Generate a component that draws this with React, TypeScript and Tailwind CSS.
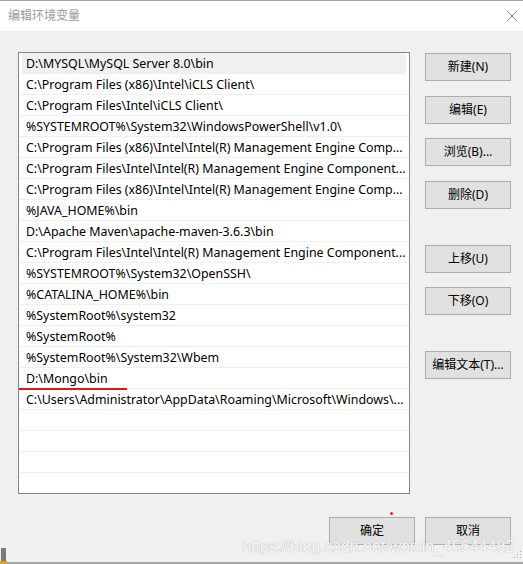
import React from "react";

const items = [
  "D:\\MYSQL\\MySQL Server 8.0\\bin",
  "C:\\Program Files (x86)\\Intel\\iCLS Client\\",
  "C:\\Program Files\\Intel\\iCLS Client\\",
  "%SYSTEMROOT%\\System32\\WindowsPowerShell\\v1.0\\",
  "C:\\Program Files (x86)\\Intel\\Intel(R) Management Engine Comp...",
  "C:\\Program Files\\Intel\\Intel(R) Management Engine Component...",
  "C:\\Program Files (x86)\\Intel\\Intel(R) Management Engine Comp...",
  "%JAVA_HOME%\\bin",
  "D:\\Apache Maven\\apache-maven-3.6.3\\bin",
  "C:\\Program Files\\Intel\\Intel(R) Management Engine Component...",
  "%SYSTEMROOT%\\System32\\OpenSSH\\",
  "%CATALINA_HOME%\\bin",
  "%SystemRoot%\\system32",
  "%SystemRoot%",
  "%SystemRoot%\\System32\\Wbem",
  "D:\\Mongo\\bin",
  "C:\\Users\\Administrator\\AppData\\Roaming\\Microsoft\\Windows\\...",
];

const rows: string[] = [...items];
while (rows.length < 21) rows.push("");

function Btn({ label, className = "" }: { label: string; className?: string }) {
  return (
    <div
      className={
        "w-[86px] h-[28px] flex items-center justify-center bg-[#e1e1e1] border border-[#adadad] text-[12px] text-black " +
        className
      }
    >
      {label}
    </div>
  );
}

export default function App() {
  return (
    <div
      className="relative w-[523px] h-[564px] bg-[#f0f0f0] overflow-hidden"
      style={{ fontFamily: '"Noto Sans", "Noto Sans CJK SC", sans-serif' }}
    >
      {/* title bar */}
      <div className="h-[31px] bg-white border-t border-[#a8a8a8] flex items-center justify-between pl-[8px] pr-[5px]">
        <span className="text-[12px] text-[#9a9a9a]">编辑环境变量</span>
        <svg width="12" height="12" viewBox="0 0 12 12">
          <path d="M1 1 L11 11 M11 1 L1 11" stroke="#8a8a8a" strokeWidth="1" />
        </svg>
      </div>

      {/* body */}
      <div className="flex pl-[18px] pt-[21px]">
        <div className="relative w-[392px] h-[442px] bg-white border border-[#828790] overflow-hidden">
          {rows.map((t, i) => (
            <div
              key={i}
              className={
                "h-[21px] border-b border-[#f0f0f0] flex items-center pt-[3px] text-[12.4px] text-black whitespace-nowrap overflow-hidden " +
                (i === 0 ? "bg-[#f0f0f0] mx-[3px] pl-[4px]" : "pl-[7px]")
              }
            >
              {t}
            </div>
          ))}
          <span className="absolute left-0 top-[335px] w-[108px] h-[2px] bg-[#e3141b]" />
        </div>

        <div className="ml-[15px] flex flex-col">
          <Btn label="新建(N)" className="mt-[1px]" />
          <Btn label="编辑(E)" className="mt-[15px]" />
          <Btn label="浏览(B)..." className="mt-[14px]" />
          <Btn label="删除(D)" className="mt-[15px]" />
          <Btn label="上移(U)" className="mt-[36px]" />
          <Btn label="下移(O)" className="mt-[14px]" />
          <Btn label="编辑文本(T)..." className="mt-[36px]" />
        </div>
      </div>

      {/* bottom buttons */}
      <div className="flex justify-end gap-[10px] pr-[12px] mt-[23px]">
        <Btn label="确定" />
        <Btn label="取消" />
      </div>

      {/* red dot */}
      <span className="absolute left-[390px] top-[512px] w-[3px] h-[3px] rounded-full bg-[#f02020]" />

      {/* watermark */}
      <span
        className="absolute left-[242px] top-[535px] text-[16px] text-[#f8f8f8] whitespace-nowrap"
        style={{ fontFamily: '"Liberation Sans", Arial, sans-serif', textShadow: "0 0 1px #bdbdbd, 0 0 1px #bdbdbd" }}
      >
        https://blog.csdn.net/weixin_45644482
      </span>

      {/* bottom line */}
      <div className="absolute left-0 right-0 bottom-0 h-[2px] bg-[#a8a8a8]" />
      {/* bottom left marker */}
      <div className="absolute left-[1px] bottom-[2px] w-[5px] h-[14px] bg-[#7a7a7a]" />
      <div className="absolute left-[0px] bottom-0 w-[7px] h-[3px] bg-[#e0a020]" />
      {/* resize grip */}
      <svg className="absolute right-[1px] bottom-[3px]" width="10" height="10" viewBox="0 0 10 10">
        <rect x="8" y="0" width="1" height="1" fill="#b0b0b0" />
        <rect x="5" y="3" width="1" height="1" fill="#b0b0b0" />
        <rect x="8" y="3" width="1" height="1" fill="#b0b0b0" />
        <rect x="2" y="6" width="1" height="1" fill="#b0b0b0" />
        <rect x="5" y="6" width="1" height="1" fill="#b0b0b0" />
        <rect x="8" y="6" width="1" height="1" fill="#b0b0b0" />
      </svg>
    </div>
  );
}
